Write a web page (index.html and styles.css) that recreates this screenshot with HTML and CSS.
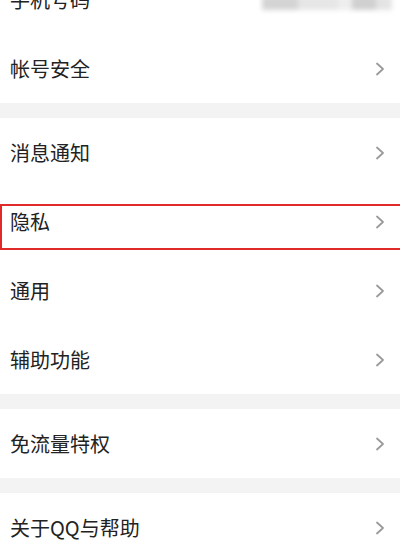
FILE: index.html
```html
<!DOCTYPE html>
<html lang="zh-CN">
<head>
<meta charset="utf-8">
<title>设置</title>
<link rel="stylesheet" href="styles.css">
</head>
<body>
<div class="page">
  <section class="group">
    <div class="row row-first">
      <span class="label">手机号码</span>
      <span class="masked">
        <i class="m m1"></i><i class="m m2"></i><i class="m m3"></i><i class="m m4"></i><i class="m m5"></i>
      </span>
    </div>
    <div class="row">
      <span class="label">帐号安全</span>
      <svg class="chev" viewBox="0 0 10 14" width="10" height="14"><path d="M2 1.5 L8 7 L2 12.5" /></svg>
    </div>
  </section>
  <div class="gap"></div>
  <section class="group">
    <div class="row">
      <span class="label">消息通知</span>
      <svg class="chev" viewBox="0 0 10 14" width="10" height="14"><path d="M2 1.5 L8 7 L2 12.5" /></svg>
    </div>
    <div class="row row-marked">
      <span class="label">隐私</span>
      <svg class="chev" viewBox="0 0 10 14" width="10" height="14"><path d="M2 1.5 L8 7 L2 12.5" /></svg>
      <span class="mark"></span>
    </div>
    <div class="row">
      <span class="label">通用</span>
      <svg class="chev" viewBox="0 0 10 14" width="10" height="14"><path d="M2 1.5 L8 7 L2 12.5" /></svg>
    </div>
    <div class="row">
      <span class="label">辅助功能</span>
      <svg class="chev" viewBox="0 0 10 14" width="10" height="14"><path d="M2 1.5 L8 7 L2 12.5" /></svg>
    </div>
  </section>
  <div class="gap"></div>
  <section class="group">
    <div class="row">
      <span class="label">免流量特权</span>
      <svg class="chev" viewBox="0 0 10 14" width="10" height="14"><path d="M2 1.5 L8 7 L2 12.5" /></svg>
    </div>
  </section>
  <div class="gap"></div>
  <section class="group">
    <div class="row">
      <span class="label">关于QQ与帮助</span>
      <svg class="chev" viewBox="0 0 10 14" width="10" height="14"><path d="M2 1.5 L8 7 L2 12.5" /></svg>
    </div>
  </section>
</div>
</body>
</html>
```

FILE: styles.css
```css
html, body {
  margin: 0;
  padding: 0;
  background: #ffffff;
  overflow: hidden;
}

body {
  font-family: "Noto Sans CJK SC", "Noto Sans", sans-serif;
  color: #222222;
}

.page {
  width: 400px;
  margin-top: -35px;
  display: flex;
  flex-direction: column;
}

.group {
  display: flex;
  flex-direction: column;
  background: #ffffff;
}

.gap {
  height: 15px;
  background: #f3f3f3;
}

.row {
  position: relative;
  height: 69px;
  display: flex;
  align-items: center;
  justify-content: space-between;
  padding: 0 15px 0 10px;
  box-sizing: border-box;
}

.label {
  font-size: 20px;
  line-height: 24px;
  letter-spacing: 0;
  padding-top: 1px;
}

.chev {
  display: block;
  fill: none;
  stroke: #9a9a9a;
  stroke-width: 1.8;
  stroke-linecap: round;
  stroke-linejoin: round;
}

.masked {
  display: flex;
  align-items: center;
  height: 16px;
  margin-top: 6px;
  margin-right: -7px;
  filter: blur(2.5px);
}

.m {
  display: block;
  height: 14px;
}
.m1 { width: 36px; background: #d4d4d4; }
.m2 { width: 40px; background: #e6e6e6; }
.m3 { width: 14px; background: #eeeeee; }
.m4 { width: 24px; background: #d0d0d0; }
.m5 { width: 16px; background: #e4e4e4; }

.mark {
  position: absolute;
  left: 0;
  right: -4px;
  top: 17px;
  height: 46px;
  border: 2px solid #e02a2a;
  box-sizing: border-box;
  pointer-events: none;
}
```
